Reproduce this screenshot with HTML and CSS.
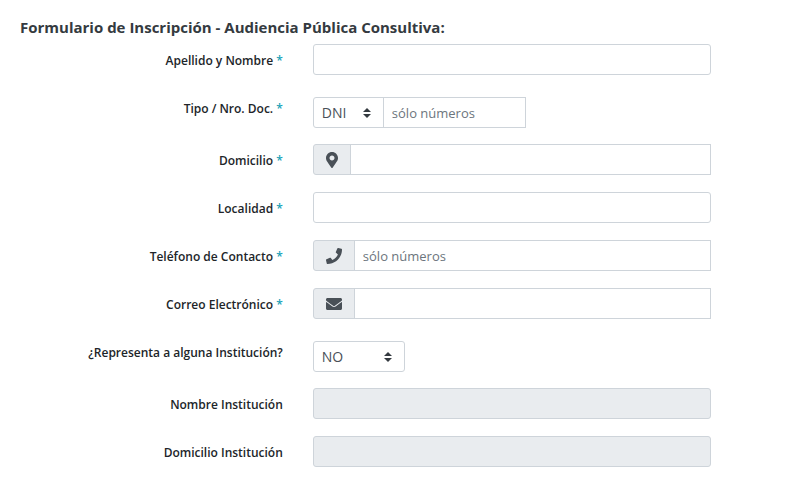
FILE: index.html
```html
<!DOCTYPE html>
<html lang="es">
<head>
<meta charset="utf-8">
<meta name="viewport" content="width=device-width, initial-scale=1">
<title>Formulario de Inscripción</title>
<link rel="stylesheet" href="styles.css">
</head>
<body>
<form class="form">
  <h1 class="title">Formulario de Inscripción - Audiencia Pública Consultiva:</h1>
  <div class="row">
    <label class="label" for="nombre">Apellido y Nombre <span class="req">*</span></label>
    <input class="control" id="nombre" type="text">
  </div>
  <div class="row row-select">
    <label class="label" for="doc">Tipo / Nro. Doc. <span class="req">*</span></label>
    <div class="group group-doc">
      <select class="control select select-doc" aria-label="Tipo de documento"><option>DNI</option></select>
      <input class="control" id="doc" type="text" placeholder="sólo números">
    </div>
  </div>
  <div class="row">
    <label class="label" for="domicilio">Domicilio <span class="req">*</span></label>
    <div class="group">
      <span class="addon"><svg width="12" height="16" viewBox="0 0 384 512" aria-hidden="true"><path d="M172.268 501.67C26.97 291.031 0 269.413 0 192 0 85.961 85.961 0 192 0s192 85.961 192 192c0 77.413-26.97 99.031-172.268 309.67-9.535 13.774-29.93 13.773-39.464 0zM192 272c44.183 0 80-35.817 80-80s-35.817-80-80-80-80 35.817-80 80 35.817 80 80 80z"/></svg></span>
      <input class="control" id="domicilio" type="text">
    </div>
  </div>
  <div class="row">
    <label class="label" for="localidad">Localidad <span class="req">*</span></label>
    <input class="control" id="localidad" type="text">
  </div>
  <div class="row">
    <label class="label" for="telefono">Teléfono de Contacto <span class="req">*</span></label>
    <div class="group">
      <span class="addon"><svg width="16" height="16" viewBox="0 0 512 512" aria-hidden="true"><path d="M493.4 24.6l-104-24c-11.3-2.6-22.9 3.3-27.5 13.9l-48 112c-4.2 9.8-1.4 21.3 6.9 28l60.6 49.6c-36 76.7-98.9 140.5-177.2 177.2l-49.6-60.6c-6.8-8.3-18.2-11.1-28-6.9l-112 48C3.9 366.5-2 378.1.6 389.4l24 104C27.1 504.2 36.7 512 48 512c256.1 0 464-207.5 464-464 0-11.2-7.7-20.9-18.6-23.4z"/></svg></span>
      <input class="control" id="telefono" type="text" placeholder="sólo números">
    </div>
  </div>
  <div class="row">
    <label class="label" for="correo">Correo Electrónico <span class="req">*</span></label>
    <div class="group">
      <span class="addon"><svg width="16" height="16" viewBox="0 0 512 512" aria-hidden="true"><path d="M502.3 190.8c3.9-3.1 9.7-.2 9.7 4.7V400c0 26.500-21.500 48-48 48H48c-26.500 0-48-21.500-48-48V195.600c0-5 5.700-7.800 9.700-4.700 22.400 17.400 52.100 39.500 154.100 113.600 21.100 15.400 56.700 47.800 92.200 47.600 35.700.3 72-32.800 92.300-47.600 102-74.100 131.600-96.300 154-113.700zM256 320c23.200.4 56.600-29.200 73.400-41.400 132.700-96.300 142.800-104.700 173.400-128.700 5.800-4.500 9.200-11.500 9.200-18.900v-19c0-26.500-21.500-48-48-48H48c-26.500 0-48 21.500-48 48v19c0 7.400 3.400 14.300 9.200 18.900 30.600 23.900 40.700 32.400 173.400 128.700 16.800 12.200 50.200 41.800 73.400 41.400z"/></svg></span>
      <input class="control" id="correo" type="email">
    </div>
  </div>
  <div class="row row-select">
    <label class="label" for="representa">¿Representa a alguna Institución?</label>
    <select class="control select select-short" id="representa"><option>NO</option></select>
  </div>
  <div class="row">
    <label class="label" for="inst">Nombre Institución</label>
    <input class="control" id="inst" type="text" disabled>
  </div>
  <div class="row">
    <label class="label" for="dominst">Domicilio Institución</label>
    <input class="control" id="dominst" type="text" disabled>
  </div>
</form>
</body>
</html>
```

FILE: styles.css
```css
* { box-sizing: border-box; }

body {
  margin: 0;
  background: #fff;
  color: #212529;
  font-family: "Segoe UI", "Open Sans", "Noto Sans", sans-serif;
  font-size: 14px;
}

.form { padding: 15px 11.4% 16px 20px; }

.title {
  margin: 0 0 5px;
  color: #343a40;
  font-size: 15px;
  font-weight: 700;
  line-height: 24px;
}

.row {
  display: grid;
  grid-template-columns: 263fr 398fr;
  column-gap: 30px;
  align-items: start;
  margin-bottom: 17px;
}

.label {
  padding-top: 8px;
  font-size: 12px;
  font-weight: 600;
  line-height: 18px;
  text-align: right;
}

.req { color: #17a2b8; }

.control {
  width: 100%;
  min-width: 0;
  height: 31px;
  padding: 4px 8px;
  border: 1px solid #ced4da;
  border-radius: 3px;
  background: #fff;
  color: #495057;
  font-family: inherit;
  font-size: 14px;
  line-height: 21px;
}

.control::placeholder { color: #6c757d; font-size: 13px; opacity: 1; }
.control:disabled { background: #e9ecef; }

.row-select { margin-bottom: 16px; }
.row-select > :last-child { margin-top: 5px; }

.select {
  appearance: none;
  background: #fff url("data:image/svg+xml,%3csvg xmlns='http://www.w3.org/2000/svg' viewBox='0 0 4 5'%3e%3cpath fill='%23343a40' d='M2 0L0 2h4zm0 5L0 3h4z'/%3e%3c/svg%3e") no-repeat right 12px center / 8px 10px;
}

.select-short { width: 92px; }

.group { display: flex; }
.group-doc { width: 213px; }
.select-doc { flex: 0 0 71px; border-radius: 3px 0 0 3px; }

.group .control:last-child {
  flex: 1;
  margin-left: -1px;
  border-radius: 0;
}

.addon {
  display: flex;
  align-items: center;
  padding: 0 12px;
  border: 1px solid #ced4da;
  border-radius: 3px 0 0 3px;
  background: #e9ecef;
  fill: #495057;
}
```
